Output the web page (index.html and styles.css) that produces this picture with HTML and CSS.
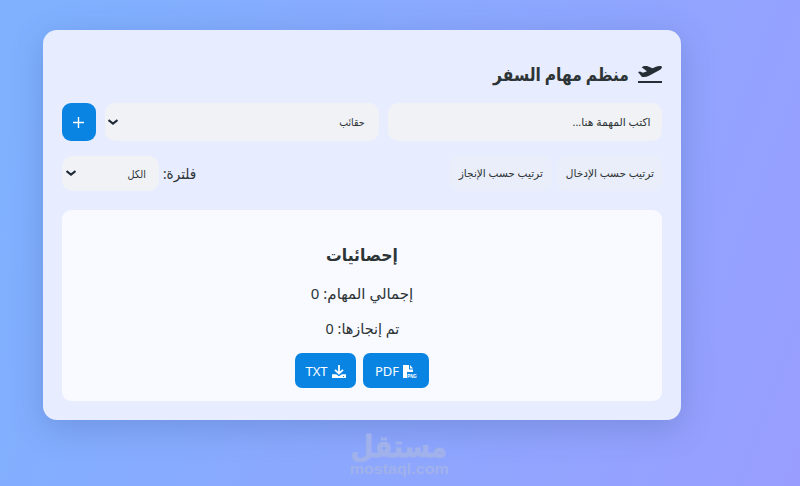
FILE: index.html
```html
<!DOCTYPE html>
<html lang="ar" dir="rtl">
<head>
<meta charset="utf-8">
<title>منظم مهام السفر</title>
<link rel="stylesheet" href="styles.css">
</head>
<body>
<main class="card">
  <h1 class="title">
    <svg class="plane" viewBox="0 0 24 18"><path d="M0 16h24v2H0zM0 7.1l2-.6 3 1.3 4-1.5L3.6 2.2 6 1.1h3l5.5 2.2L18 1.7c2-.8 5.4-1 6 .1.2 1.2-1.2 2.6-3.2 3.7L11 10.8c-2 1-4.5 1.4-7 1.1z"/></svg>
    <span class="title-text">منظم مهام السفر</span>
  </h1>
  <div class="entry">
    <div class="field task"><span class="task-text">اكتب المهمة هنا...</span></div>
    <div class="field category"><span class="category-text">حقائب</span><svg class="chevron" viewBox="0 0 10 6"><path d="M.5 1L5 4.6 9.5 1"/></svg></div>
    <button class="add"><svg viewBox="0 0 11 11"><path d="M5.5 0v11M0 5.5h11"/></svg></button>
  </div>
  <div class="tools">
    <div class="sorts">
      <button class="sort"><span class="sort-a">ترتيب حسب الإدخال</span></button>
      <button class="sort"><span class="sort-b">ترتيب حسب الإنجاز</span></button>
    </div>
    <div class="filter">
      <span class="filter-label">فلترة:</span>
      <div class="field all"><span class="all-text">الكل</span><svg class="chevron" viewBox="0 0 10 6"><path d="M.5 1L5 4.6 9.5 1"/></svg></div>
    </div>
  </div>
  <section class="stats">
    <h2 class="stats-title">إحصائيات</h2>
    <p class="total">إجمالي المهام: 0</p>
    <p class="done">تم إنجازها: 0</p>
    <div class="exports">
      <button class="export pdf"><svg class="icon" viewBox="0 0 14 14"><path d="M0 0h6v4.5h4V7H4v6H0zM7 0l3 3.5H7z"/><text x="4.2" y="13.2" textLength="9.6" lengthAdjust="spacingAndGlyphs">PNG</text></svg><span>PDF</span></button>
      <button class="export txt"><svg class="icon" viewBox="0 0 14 14"><path d="M0 9.2h4.1L7 11.3l2.9-2.1H14V13H0z"/><path class="line" d="M7 0v8M3 4.8L7 8.6l4-3.8"/><path class="dot" d="M11 11h1v1h-1z"/></svg><span>TXT</span></button>
    </div>
  </section>
</main>
<footer class="mark">
  <span class="mark-ar">مستقل</span>
  <span class="mark-en">mostaql.com</span>
</footer>
</body>
</html>
```
FILE: styles.css
```css
* { box-sizing: border-box; }
html { height: 100%; }
body {
  margin: 0; height: 486px; overflow: hidden; padding: 30px 119px 0 43px;
  background: linear-gradient(110deg, #7fb1ff 5%, #999efe 100%);
  color: #2d3436; font-family: "Noto Sans", "DejaVu Sans", sans-serif;
}
h1, h2, p { margin: 0; }
span { white-space: nowrap; }
button { border: 0; padding: 0; font: inherit; color: inherit; }
.card {
  width: 638px; height: 390px; padding: 29px 19px 19px; border-radius: 14px;
  background: #e7edff; box-shadow: 0 8px 32px rgba(45, 75, 130, .25);
}
.title { display: flex; align-items: center; gap: 9px; height: 32px; font-size: 18px; line-height: 32px; }
.title-text { margin-top: -2px; transform: scaleX(.86); transform-origin: right; }
.plane { width: 24px; height: 18px; margin-top: -3px; fill: #252d35; }
.entry { display: flex; gap: 9px; margin-top: 12px; height: 38px; }
.field { display: flex; align-items: center; justify-content: space-between; border-radius: 10px; background: #f0f2f6; font-size: 11px; }
.task { width: 274px; padding: 0 11px 2px; }
.task-text { transform: scaleX(.98); transform-origin: right; }
.category { width: 274px; padding: 0 14px 1px 3px; }
.category-text { transform: scaleX(.86); transform-origin: right; }
.chevron { width: 10px; height: 6px; fill: none; stroke: #1f2937; stroke-width: 2; }
.add { display: flex; align-items: center; justify-content: center; width: 34px; padding-right: 2px; border-radius: 9px; background: #0984e3; }
.add svg { width: 11px; height: 11px; stroke: #fff; stroke-width: 1.4; }
.tools { display: flex; justify-content: space-between; margin-top: 15px; height: 35px; }
.sorts { display: flex; gap: 5px; }
.sort { width: 105px; padding: 0 0 2px; border-radius: 9px; background: #e9eefa; font-size: 11px; }
.sort + .sort { width: 102px; }
.sort span { display: inline-block; transform: scaleX(.96); }
.filter { display: flex; align-items: center; gap: 4px; font-size: 15px; }
.filter-label { margin: -2px 0 0 0; transform: scaleX(.9); transform-origin: left; }
.all { width: 97px; height: 35px; padding: 0 13px 1px 4px; }
.all-text { transform: scaleX(.88); transform-origin: right; }
.stats { display: flex; flex-direction: column; align-items: center; margin-top: 19px; height: 191px; border-radius: 9px; background: #f8faff; padding-top: 30px; }
.stats-title { font-size: 17px; line-height: 30px; transform: scaleX(.92); }
.total { margin-top: 8px; font-size: 15px; line-height: 30px; }
.done { margin-top: 5px; font-size: 15px; line-height: 30px; transform: scaleX(.96); }
.exports { display: flex; gap: 7px; margin-top: 10px; }
.export { display: flex; align-items: center; justify-content: center; gap: 4px; height: 35px; border-radius: 7px; background: #0984e3; color: #fff; font-size: 13px; font-weight: 400; }
.export span { margin-top: 1px; }
.pdf { width: 66px; }
.txt { width: 61px; }
.icon { width: 14px; height: 14px; margin-top: 2px; fill: #fff; overflow: visible; }
.icon text { font: bold 5px "Liberation Sans", sans-serif; direction: ltr; }
.line { fill: none; stroke: #fff; stroke-width: 1.8; }
.dot { fill: #0984e3; }
.mark { display: flex; flex-direction: column; align-items: center; width: 98px; margin: 9px 233px 0 auto; color: #a0b1eb; font-weight: bold; }
.mark-ar { font-size: 30px; line-height: 34px; transform: scaleX(.88); -webkit-text-stroke: .8px #a0b1eb; }
.mark-en { font-family: "Liberation Sans", sans-serif; font-size: 15px; line-height: 12px; transform: scaleX(1.07); }
```
